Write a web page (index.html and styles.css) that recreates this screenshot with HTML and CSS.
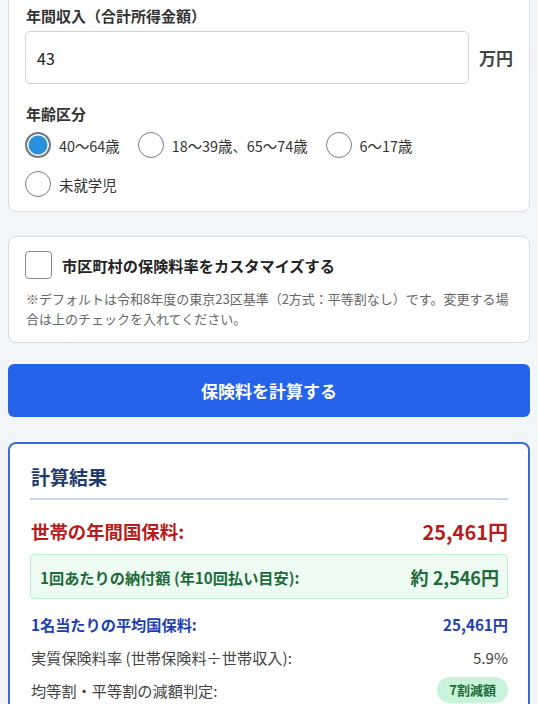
FILE: index.html
```html
<!DOCTYPE html>
<html lang="ja">
<head>
<meta charset="utf-8">
<title>国民健康保険料 計算</title>
<link rel="stylesheet" href="styles.css">
</head>
<body>
<main class="page">
  <section class="card card-input">
    <div class="field-label">年間収入（合計所得金額）</div>
    <div class="income-row">
      <div class="text-input">43</div>
      <span class="unit">万円</span>
    </div>
    <div class="field-label age-label">年齢区分</div>
    <div class="radio-group">
      <label class="radio-item"><span class="radio checked"></span><span>40〜64歳</span></label>
      <label class="radio-item"><span class="radio"></span><span>18〜39歳、65〜74歳</span></label>
      <label class="radio-item"><span class="radio"></span><span>6〜17歳</span></label>
      <label class="radio-item"><span class="radio"></span><span>未就学児</span></label>
    </div>
  </section>

  <section class="card card-custom">
    <label class="check-row"><span class="checkbox"></span><span class="check-label">市区町村の保険料率をカスタマイズする</span></label>
    <p class="note">※デフォルトは令和8年度の東京23区基準（2方式：平等割なし）です。変更する場合は上のチェックを入れてください。</p>
  </section>

  <button class="calc-btn" type="button">保険料を計算する</button>

  <section class="result">
    <h2 class="result-title">計算結果</h2>
    <div class="row row-total"><span>世帯の年間国保料:</span><span class="total-val">25,461円</span></div>
    <div class="row-install"><span>1回あたりの納付額 (年10回払い目安):</span><span class="install-val">約 2,546円</span></div>
    <div class="row row-avg"><span>1名当たりの平均国保料:</span><span>25,461円</span></div>
    <div class="row row-plain"><span>実質保険料率 (世帯保険料÷世帯収入):</span><span>5.9%</span></div>
    <div class="row row-plain"><span>均等割・平等割の減額判定:</span><span class="badge">7割減額</span></div>
  </section>
</main>
</body>
</html>
```

FILE: styles.css
```css
* { box-sizing: border-box; }
html, body { margin: 0; padding: 0; }
body {
  background: #f3f6f9;
  font-family: "Noto Sans CJK JP", "Noto Sans", sans-serif;
  color: #333;
  overflow: hidden;
}
.page { padding: 0 8px; }

.card {
  background: #fff;
  border: 1px solid #d9dde3;
  border-radius: 8px;
}
.card-input {
  margin-top: -12px;
  padding: 16px 16px 14px;
  margin-bottom: 24px;
}
.field-label {
  font-size: 15px;
  font-weight: 700;
  line-height: 22px;
  color: #333;
  padding-left: 1px;
}
.income-row {
  display: flex;
  align-items: center;
  gap: 10px;
  margin-top: 4px;
}
.text-input {
  flex: 1;
  height: 53px;
  border: 1px solid #cfd3d8;
  border-radius: 5px;
  background: #fff;
  padding: 0 11px;
  display: flex;
  align-items: center;
  font-size: 16px;
  color: #222;
}
.unit {
  font-size: 17px;
  font-weight: 700;
  color: #444;
}
.age-label { margin-top: 19px; }
.radio-group {
  display: flex;
  flex-wrap: wrap;
  column-gap: 18px;
  row-gap: 13px;
  margin-top: 7px;
}
.radio-item {
  display: flex;
  align-items: center;
  gap: 8px;
  font-size: 14.4px;
  color: #333;
}
.radio {
  width: 26px;
  height: 26px;
  border-radius: 50%;
  border: 1px solid #777c83;
  background: #fff;
  flex: none;
}
.radio.checked {
  border: 2px solid #737a82;
  background: #2b90de;
  box-shadow: inset 0 0 0 1.5px #fff;
}

.card-custom {
  padding: 14px 17px 13px 16px;
  margin-bottom: 21px;
}
.check-row {
  display: flex;
  align-items: center;
  gap: 10px;
}
.checkbox {
  width: 27px;
  height: 28px;
  border: 1px solid #868b92;
  border-radius: 4px;
  background: #fff;
  flex: none;
}
.check-label {
  font-size: 15.2px;
  font-weight: 700;
  color: #222;
}
.note {
  margin: 10px 0 0 1px;
  font-size: 13px;
  line-height: 20px;
  color: #666;
}

.calc-btn {
  display: block;
  width: 100%;
  height: 53px;
  border: none;
  border-radius: 6px;
  background: #2563eb;
  color: #fff;
  font-family: inherit;
  font-size: 17px;
  font-weight: 700;
  margin: 0 0 25px;
}

.result {
  background: #fff;
  border: 2px solid #3a6bd4;
  border-radius: 8px;
  padding: 19px 20px 0;
  min-height: 300px;
}
.result-title {
  margin: 0;
  font-size: 19px;
  line-height: 28px;
  font-weight: 700;
  color: #1e3a6e;
  padding: 0 0 7px 1px;
  border-bottom: 2px solid #c7d7f0;
}
.row {
  display: flex;
  justify-content: space-between;
  align-items: center;
  padding-left: 1px;
}
.row-total {
  margin-top: 16px;
  height: 30px;
  font-size: 18.4px;
  font-weight: 700;
  color: #b91c1c;
}
.total-val { font-size: 20px; }
.row-install {
  margin-top: 8px;
  height: 45px;
  display: flex;
  justify-content: space-between;
  align-items: center;
  padding: 0 8px 0 9px;
  background: #edfbf3;
  border: 1px solid #bfeed3;
  border-radius: 4px;
  color: #1e6b3a;
  font-size: 15.2px;
  font-weight: 700;
}
.install-val { font-size: 18px; }
.row-avg {
  margin-top: 8px;
  height: 33px;
  font-size: 15.2px;
  font-weight: 700;
  color: #1e40af;
}
.row-plain {
  height: 33px;
  font-size: 15.2px;
  color: #444;
}
.badge {
  font-size: 13px;
  font-weight: 700;
  color: #1e6b3a;
  background: #c8f3d9;
  border-radius: 13px;
  padding: 2px 12px;
  line-height: 22px;
}
```
